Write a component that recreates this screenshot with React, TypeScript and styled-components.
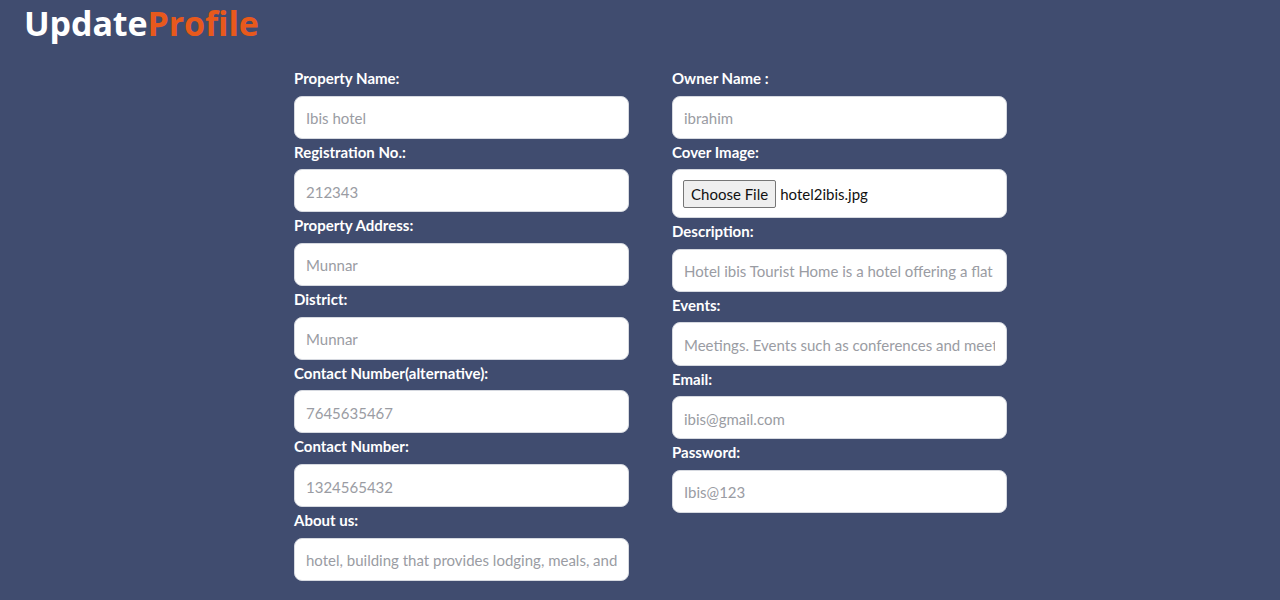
import React from "react";
import styled, { createGlobalStyle } from "styled-components";

const GlobalStyle = createGlobalStyle`
  html, body {
    margin: 0;
    padding: 0;
    background: #404c6f;
  }
  body {
    font-family: Lato, "Noto Sans", sans-serif;
  }
`;

const Page = styled.div`
  min-height: 600px;
  background: #404c6f;
  padding: 2px 24px 0;
  box-sizing: border-box;
`;

const Title = styled.h1`
  margin: 0;
  font-family: "Open Sans", "Noto Sans", sans-serif;
  font-weight: 700;
  font-size: 34px;
  line-height: 42px;
  letter-spacing: -0.1px;
  color: #ffffff;
`;

const Accent = styled.span`
  color: #e8591c;
`;

const Form = styled.form`
  display: grid;
  grid-template-columns: 335px 335px;
  column-gap: 43px;
  margin: 21px 0 0 270px;
  align-items: start;
`;

const Column = styled.div`
  display: flex;
  flex-direction: column;
`;

const Label = styled.label`
  display: block;
  margin: 3px 0 7.5px;
  font-size: 15px;
  line-height: 20px;
  font-weight: 700;
  color: #ffffff;
`;

const Input = styled.input`
  box-sizing: border-box;
  width: 100%;
  height: 43.2px;
  padding: 2px 11px 0;
  border: 1px solid #d6d9e0;
  border-radius: 8px;
  background: #ffffff;
  font-family: Lato, "Noto Sans", sans-serif;
  font-size: 15px;
  color: #333;
  outline: none;

  &::placeholder {
    color: #9a9ca3;
  }
`;

const FileBox = styled.div`
  box-sizing: border-box;
  display: flex;
  align-items: center;
  gap: 4px;
  height: 49px;
  padding: 0 10px;
  border: 1px solid #d6d9e0;
  border-radius: 8px;
  background: #ffffff;
`;

const FileButton = styled.button`
  height: 28px;
  padding: 0 7px;
  border: 1px solid #767676;
  border-radius: 2px;
  background: #efefef;
  font-family: Lato, "Noto Sans", sans-serif;
  font-size: 15px;
  color: #111;
`;

const FileName = styled.span`
  font-size: 15px;
  color: #111;
`;

type Field = { label: string; placeholder: string };

const left: Field[] = [
  { label: "Property Name:", placeholder: "Ibis hotel" },
  { label: "Registration No.:", placeholder: "212343" },
  { label: "Property Address:", placeholder: "Munnar" },
  { label: "District:", placeholder: "Munnar" },
  { label: "Contact Number(alternative):", placeholder: "7645635467" },
  { label: "Contact Number:", placeholder: "1324565432" },
  { label: "About us:", placeholder: "hotel, building that provides lodging, meals, and other services" },
];

const right: Field[] = [
  { label: "Description:", placeholder: "Hotel ibis Tourist Home is a hotel offering a flat screen TV" },
  { label: "Events:", placeholder: "Meetings. Events such as conferences and meetings" },
  { label: "Email:", placeholder: "ibis@gmail.com" },
  { label: "Password:", placeholder: "Ibis@123" },
];

const App: React.FC = () => {
  return (
    <>
      <GlobalStyle />
      <Page>
        <Title>
          Update<Accent>Profile</Accent>
        </Title>
        <Form onSubmit={(e) => e.preventDefault()}>
          <Column>
            {left.map((f) => (
              <div key={f.label}>
                <Label>{f.label}</Label>
                <Input placeholder={f.placeholder} />
              </div>
            ))}
          </Column>
          <Column>
            <div>
              <Label>Owner Name :</Label>
              <Input placeholder="ibrahim" />
            </div>
            <div>
              <Label>Cover Image:</Label>
              <FileBox>
                <FileButton type="button">Choose File</FileButton>
                <FileName>hotel2ibis.jpg</FileName>
              </FileBox>
            </div>
            {right.map((f) => (
              <div key={f.label}>
                <Label>{f.label}</Label>
                <Input placeholder={f.placeholder} />
              </div>
            ))}
          </Column>
        </Form>
      </Page>
    </>
  );
};

export default App;
